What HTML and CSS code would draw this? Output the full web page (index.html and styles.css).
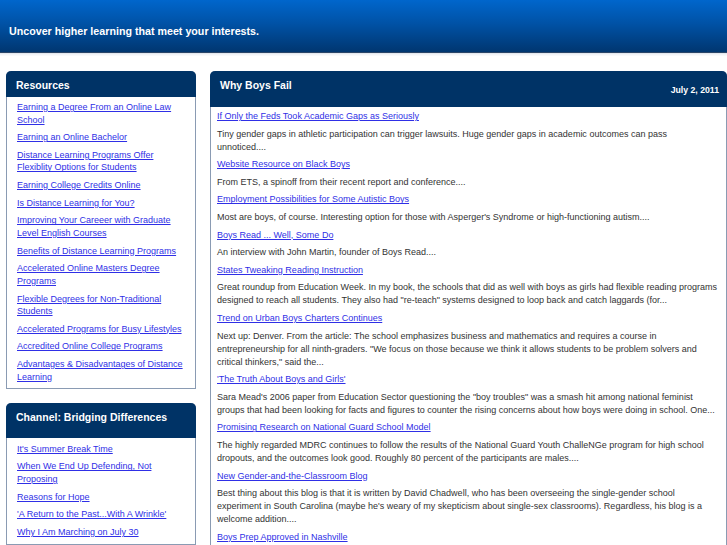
FILE: index.html
```html
<!DOCTYPE html>
<html>
<head>
<meta charset="utf-8">
<title>Why Boys Fail</title>
<link rel="stylesheet" href="styles.css">
</head>
<body>
<div class="top">
  <div class="tagline">Uncover higher learning that meet your interests.</div>
</div>
<div class="page">
  <div class="sidebar">
    <div class="box">
      <div class="box-head">Resources</div>
      <div class="box-body">
        <a href="#">Earning a Degree From an Online Law School</a>
        <a href="#">Earning an Online Bachelor</a>
        <a href="#">Distance Learning Programs Offer Flexiblity Options for Students</a>
        <a href="#">Earning College Credits Online</a>
        <a href="#">Is Distance Learning for You?</a>
        <a href="#">Improving Your Careeer with Graduate Level English Courses</a>
        <a href="#">Benefits of Distance Learning Programs</a>
        <a href="#">Accelerated Online Masters Degree Programs</a>
        <a href="#">Flexible Degrees for Non-Traditional Students</a>
        <a href="#">Accelerated Programs for Busy Lifestyles</a>
        <a href="#">Accredited Online College Programs</a>
        <a href="#">Advantages &amp; Disadvantages of Distance Learning</a>
      </div>
    </div>
    <div class="box">
      <div class="box-head tall">Channel: Bridging Differences</div>
      <div class="box-body channel">
        <a href="#">It's Summer Break Time</a>
        <a href="#">When We End Up Defending, Not Proposing</a>
        <a href="#">Reasons for Hope</a>
        <a href="#">'A Return to the Past...With A Wrinkle'</a>
        <a href="#">Why I Am Marching on July 30</a>
      </div>
    </div>
  </div>
  <div class="main">
    <div class="main-head">
      <div class="main-title">Why Boys Fail</div>
      <div class="date">July 2, 2011</div>
    </div>
    <div class="main-body">
      <a href="#">If Only the Feds Took Academic Gaps as Seriously</a>
      <p>Tiny gender gaps in athletic participation can trigger lawsuits. Huge gender gaps in academic outcomes can pass unnoticed....</p>
      <a href="#">Website Resource on Black Boys</a>
      <p>From ETS, a spinoff from their recent report and conference....</p>
      <a href="#">Employment Possibilities for Some Autistic Boys</a>
      <p>Most are boys, of course. Interesting option for those with Asperger's Syndrome or high-functioning autism....</p>
      <a href="#">Boys Read ... Well, Some Do</a>
      <p>An interview with John Martin, founder of Boys Read....</p>
      <a href="#">States Tweaking Reading Instruction</a>
      <p>Great roundup from Education Week. In my book, the schools that did as well with boys as girls had flexible reading programs designed to reach all students. They also had "re-teach" systems designed to loop back and catch laggards (for...</p>
      <a href="#">Trend on Urban Boys Charters Continues</a>
      <p>Next up: Denver. From the article: The school emphasizes business and mathematics and requires a course in entrepreneurship for all ninth-graders. "We focus on those because we think it allows students to be problem solvers and critical thinkers," said the...</p>
      <a href="#">'The Truth About Boys and Girls'</a>
      <p>Sara Mead's 2006 paper from Education Sector questioning the "boy troubles" was a smash hit among national feminist groups that had been looking for facts and figures to counter the rising concerns about how boys were doing in school. One...</p>
      <a href="#">Promising Research on National Guard School Model</a>
      <p>The highly regarded MDRC continues to follow the results of the National Guard Youth ChalleNGe program for high school dropouts, and the outcomes look good. Roughly 80 percent of the participants are males....</p>
      <a href="#">New Gender-and-the-Classroom Blog</a>
      <p>Best thing about this blog is that it is written by David Chadwell, who has been overseeing the single-gender school experiment in South Carolina (maybe he's weary of my skepticism about single-sex classrooms). Regardless, his blog is a welcome addition....</p>
      <a href="#">Boys Prep Approved in Nashville</a>
    </div>
  </div>
</div>
</body>
</html>
```

FILE: styles.css
```css
html, body {
  margin: 0;
  padding: 0;
  background: #ffffff;
}
body {
  font-family: "Liberation Sans", Arial, Helvetica, sans-serif;
  font-size: 9px;
  color: #333333;
}
.top {
  height: 53px;
  box-sizing: border-box;
  padding: 24.5px 9px 0;
  background: linear-gradient(to bottom, #0066cc 0%, #0052a6 45%, #003670 100%);
  border-bottom: 1px solid #2b4668;
  box-shadow: 0 1px 0 #e4e8ee, 0 2px 0 #f2f4f7, 0 3px 0 #f8f9fb;
}
.tagline {
  color: #ffffff;
  font-weight: bold;
  font-size: 10.7px;
  line-height: 13px;
}
.page {
  display: flex;
  align-items: flex-start;
  gap: 14px;
  padding: 18px 0 0 6px;
}
.sidebar {
  width: 190px;
  flex: none;
  display: flex;
  flex-direction: column;
  gap: 14px;
}
.box {
  border: 1px solid #8a9bb3;
  border-top: none;
  border-radius: 5px 5px 0 0;
  background: #ffffff;
}
.box-head {
  background: #003366;
  color: #ffffff;
  font-weight: bold;
  font-size: 10.5px;
  line-height: 13px;
  height: 26px;
  box-sizing: border-box;
  padding: 7.5px 10px 0;
  border-radius: 5px 5px 0 0;
  margin: 0 -1px;
}
.box-head.tall {
  height: 35px;
}
.box-body {
  display: flex;
  flex-direction: column;
  padding: 4px 8px 0 10px;
}
.box-body.channel {
  padding-top: 4.5px;
}
a {
  color: #2f2fe6;
  text-decoration: underline;
}
.box-body a {
  line-height: 12.5px;
  margin-bottom: 5.2px;
}
.main {
  flex: 1;
  border: 1px solid #8a9bb3;
  border-top: none;
  border-radius: 5px 5px 0 0;
  min-height: 480px;
}
.main-head {
  background: #003366;
  color: #ffffff;
  display: flex;
  justify-content: space-between;
  align-items: flex-start;
  height: 36px;
  box-sizing: border-box;
  padding: 8px 8px 0 10px;
  border-radius: 5px 5px 0 0;
  margin: 0 -1px;
}
.main-title {
  font-weight: bold;
  font-size: 10.5px;
  line-height: 13px;
}
.date {
  font-weight: bold;
  font-size: 8.7px;
  line-height: 13px;
  margin-top: 5px;
}
.main-body {
  display: flex;
  flex-direction: column;
  align-items: flex-start;
  padding: 3px 8px 0 6px;
}
.main-body a {
  line-height: 13px;
  margin-bottom: 4.6px;
}
.main-body p {
  margin: 0 0 4.6px;
  line-height: 13px;
}
```
